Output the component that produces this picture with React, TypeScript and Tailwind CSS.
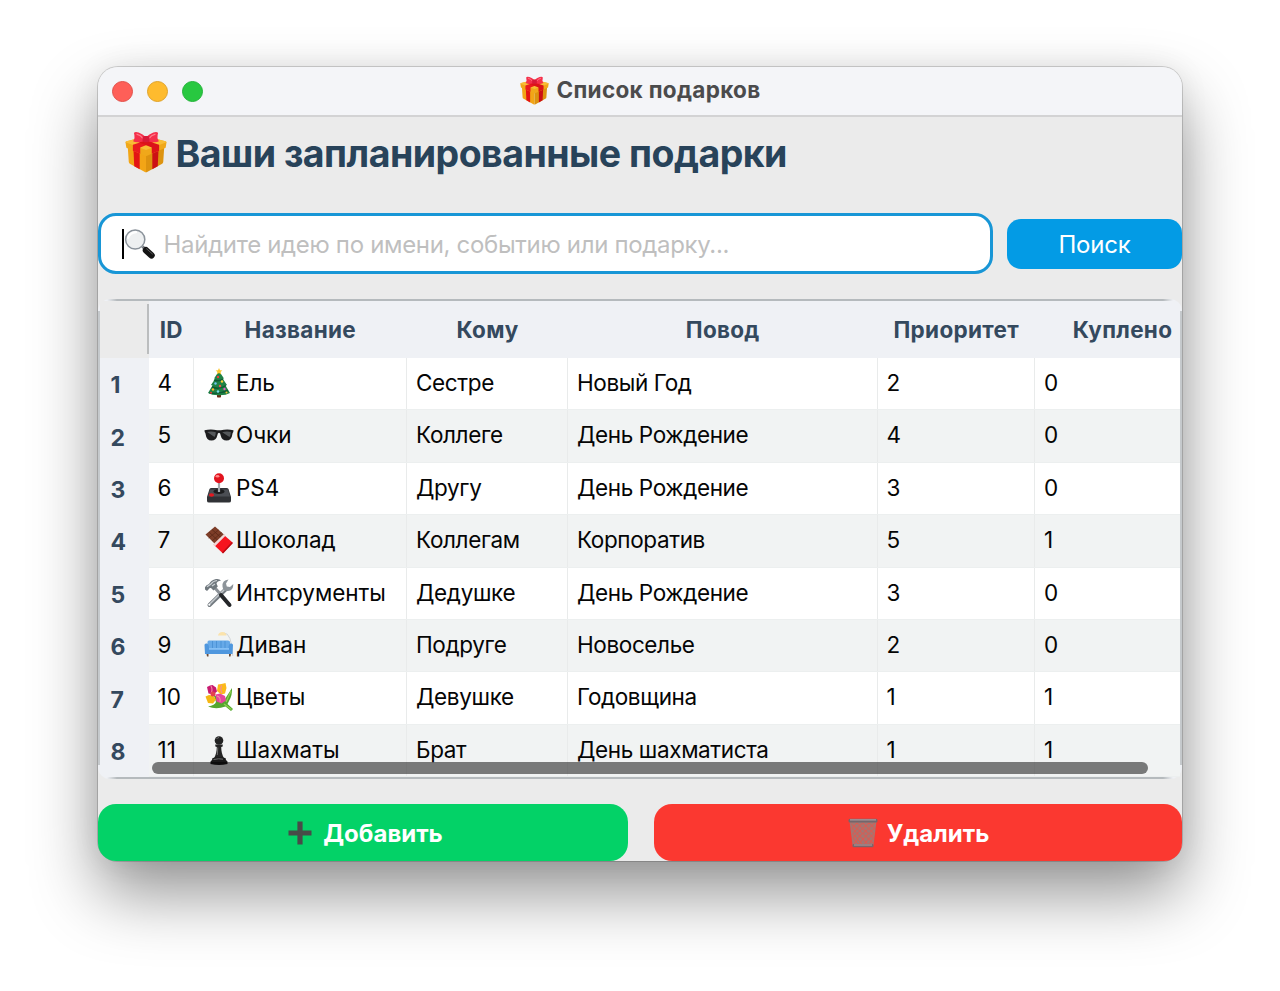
import React from "react";

type IconProps = { className?: string };

const Gift = ({ className }: IconProps) => (
  <svg viewBox="0 0 40 40" className={className}>
    <path d="M2.500 13 L20 20 L20 39.300 Q19.500 39.400 18.500 38.800 L5 31.500 Q3.800 30.800 3.600 29.500 Z" fill="#f2a516" />
    <path d="M37.500 13 L20 20 L20 39.300 Q20.500 39.400 21.500 38.800 L35 31.500 Q36.200 30.800 36.400 29.500 Z" fill="#dd930f" />
    <path d="M8 16 L14 18.500 L14 36.400 L8.800 33.600 Z" fill="#e31414" />
    <path d="M26 18.500 L32 16 L31.200 33.600 L26 36.400 Z" fill="#cc1014" />
    <path d="M.5 11 Q.5 10 1.500 9.700 L20 5 L38.500 9.700 Q39.500 10 39.500 11 L38.700 16 L20 24 L1.300 16 Z" fill="#f0a81a" />
    <path d="M.5 10.800 Q.5 10 1.500 9.700 L20 5 L38.500 9.700 Q39.500 10 39.500 10.800 L20 18 Z" fill="#f9bd36" />
    <path d="M7.500 13.200 L23 8 L30 9.500 L14.500 15.700 L14.500 21.700 L7.500 18.700 Z" fill="#ea1b1f" />
    <path d="M32.500 13.200 L17 8 L10 9.500 L25.500 15.700 L25.500 21.700 L32.500 18.700 Z" fill="#dc1319" />
    <path d="M19 9.500 Q11 12 7.700 9.800 Q10 7 8.500 2 Q9.500 .3 13 1.500 Q17 3 20 6 Q23 3 27 1.500 Q30.500 .3 31.500 2 Q30 7 32.300 9.800 Q29 12 21 9.500 Z" fill="#f5304b" />
    <path d="M11 3 Q15 4 17.500 7.500 M29 3 Q25 4 22.500 7.500" stroke="#ff7a88" strokeWidth="1.200" fill="none" />
    <rect x="16.700" y="4.800" width="6.600" height="6" rx="2" fill="#d81a38" />
  </svg>
);

const Magnifier = ({ className }: IconProps) => (
  <svg viewBox="0 0 32 32" className={className}>
    <path d="M18.500 18.500 L23 23" stroke="#777b80" strokeWidth="3" />
    <path d="M22 22.300 L27.500 27.300" stroke="#141414" strokeWidth="6.500" strokeLinecap="round" />
    <path d="M22.500 20.800 L28.500 26" stroke="#5a5a5a" strokeWidth="1" strokeLinecap="round" />
    <circle cx="11.200" cy="11.500" r="9.600" fill="#eef0f1" stroke="#8b939b" strokeWidth="1.500" />
    <path d="M4 10 Q6 4.500 12 4.200" stroke="#fff" strokeWidth="2.200" fill="none" strokeLinecap="round" />
  </svg>
);

const Tree = ({ className }: IconProps) => (
  <svg viewBox="0 0 30 30" className={className}>
    <rect x="13" y="25" width="4" height="4.500" rx=".8" fill="#6e2c14" />
    <path d="M15 3 L20 10.500 L18.800 10.800 L23 17 L21.500 17.500 L26 25 Q22 27.500 15 27.300 Q8 27.500 4 25 L8.500 17.500 L7 17 L11.200 10.800 L10 10.500 Z" fill="#1f8246" />
    <path d="M10 12 Q15 14 19 11 M8 19 Q15 22 22 17.500 M5.500 25 Q15 26.500 24 22.500" stroke="#0e5a35" strokeWidth="1.400" fill="none" />
    <path d="M15 0 L16 2.300 L18.400 2.500 L16.500 4 L17.200 6.400 L15 5.100 L12.800 6.400 L13.500 4 L11.600 2.500 L14 2.300 Z" fill="#fdc62d" />
    <circle cx="14" cy="9" r="1.200" fill="#f03b3b" />
    <circle cx="18" cy="13.500" r="1.200" fill="#ffce3a" />
    <circle cx="11.500" cy="15.500" r="1.200" fill="#6fc5f2" />
    <circle cx="16" cy="18" r="1.200" fill="#f3544b" />
    <circle cx="20.500" cy="21" r="1.200" fill="#e35cc0" />
    <circle cx="9" cy="21.500" r="1.200" fill="#ffb52e" />
    <circle cx="14" cy="23.500" r="1.200" fill="#7bdcec" />
    <circle cx="7" cy="24.800" r="1" fill="#ef3a3a" />
    <circle cx="22.500" cy="24.500" r="1" fill="#f8c235" />
  </svg>
);

const Sunglasses = ({ className }: IconProps) => (
  <svg viewBox="0 0 30 30" className={className}>
    <path d="M.5 10.200 Q7 8.600 13.200 10.300 L16.800 10.300 Q23 8.600 29.500 10.200 L29.300 12 Q28.500 12.500 28.300 14.500 Q27.600 20.500 22.500 20.500 Q17.800 20.500 16.700 15.500 Q16.400 12.800 15 12.800 Q13.600 12.800 13.300 15.500 Q12.200 20.500 7.500 20.500 Q2.400 20.500 1.700 14.500 Q1.500 12.500 .7 12 Z" fill="#1d1d1f" />
    <path d="M3.200 12 Q7 10.800 11.800 12.200 Q11.800 15 10.500 17 Z M18.200 12.200 Q23 10.800 26.800 12 Q27 15 25.500 17 Z" fill="#55585b" />
  </svg>
);

const Joystick = ({ className }: IconProps) => (
  <svg viewBox="0 0 30 30" className={className}>
    <path d="M5.500 16 Q6 15 7.500 15 L22.500 15 Q24 15 24.500 16 L27 24 L27 28 Q26.900 29.500 25 29.500 L5 29.500 Q3.100 29.500 3 28 L3 24 Z" fill="#303236" />
    <path d="M6 16.500 L24 16.500 L26 23.500 L4 23.500 Z" fill="#4b4e54" />
    <ellipse cx="15" cy="18.500" rx="5.500" ry="2.500" fill="#1b1c1e" />
    <rect x="13.900" y="9" width="2.200" height="10" fill="#a5a9ae" />
    <circle cx="15" cy="5.200" r="5" fill="#e2131e" />
    <ellipse cx="13.500" cy="3.300" rx="1.900" ry="1.300" fill="#ff8b8b" />
    <ellipse cx="7.500" cy="22" rx="2.600" ry="1.700" fill="#e41820" />
  </svg>
);

const Chocolate = ({ className }: IconProps) => (
  <svg viewBox="0 0 30 30" className={className}>
    <path d="M11 1.500 L20.500 10 L11 19 L1.500 9.500 Z" fill="#7d3d28" />
    <path d="M8 4.500 L17.500 13 M5 7 L14.500 16 M14.500 5 L4.700 13 M17.500 7.500 L8 16" stroke="#5a2818" strokeWidth=".8" />
    <path d="M20 10 L28.500 17.500 Q28.800 18 28.500 18.500 L19.500 28 Q19 28.300 18.500 28 L9.500 19.500 Z" fill="#f6141e" />
    <path d="M20 9 L21.500 10.800 L11 21.200 L9 19.500 Z" fill="#f0d9d8" />
    <path d="M28.800 18 L19 28.500 L18 27.500 L27.800 17 Z" fill="#b80c14" />
  </svg>
);

const Tools = ({ className }: IconProps) => (
  <svg viewBox="0 0 30 30" className={className}>
    <path d="M21.500 11.500 L5.500 27" stroke="#737a80" strokeWidth="4" strokeLinecap="round" />
    <path d="M20.500 11.500 L5.300 26.500" stroke="#c2c7cb" strokeWidth="1.600" strokeLinecap="round" />
    <path d="M24.500 1.500 Q18 2 18.500 8.500 Q19 13.500 24 13 Q29.500 12.500 29.300 6 L26 9 L22.800 8.500 L22 5.500 Z" fill="#8d949a" />
    <path d="M11 10 L18 18" stroke="#8a9096" strokeWidth="3" />
    <path d="M17 17 L25.500 27" stroke="#242629" strokeWidth="4" strokeLinecap="round" />
    <path d="M1 11.500 Q.3 9 2.300 7.500 L5 6 Q7 2 12 1 Q15.500 .5 17 2.500 Q13 3 12.500 5.500 L13.800 8.500 L9.500 12.500 L7 10 Q5 9.500 4.500 11.500 L3 13 Z" fill="#70787e" />
    <path d="M3 8.800 L7 6 Q9 3 13 2.500 M8 8 L11 6" stroke="#ccd1d5" strokeWidth="1.200" fill="none" />
    <circle cx="5.300" cy="26.700" r="1" fill="#fff" />
  </svg>
);

const Sofa = ({ className }: IconProps) => (
  <svg viewBox="0 0 30 30" className={className}>
    <path d="M20 3 Q27.500 2.500 28.800 26" stroke="#c9cbce" strokeWidth=".8" fill="none" />
    <path d="M14 5.500 Q14.500 2 18.500 2 Q22 2.200 22.500 5.500 Z" fill="#fbe3ac" />
    <path d="M3.500 12 Q3.500 10.500 5 10.500 L24 10.500 Q26 10.500 26 12 L26 21 L3.500 21 Z" fill="#66a9e8" />
    <path d="M8.500 11 V18 M12.500 11 V18 M17 11 V18 M21 11 V18" stroke="#4089cf" strokeWidth=".7" />
    <path d="M.5 15 Q.5 13 3 13.500 Q5 14 5 18 L24.500 18 Q24.500 14 26.500 13.500 Q29 13 29 15 L28.500 24 L1 24 Z" fill="#4f97de" />
    <path d="M5 18 L25 18 L25 19.800 L5 19.800 Z" fill="#85c0f5" />
    <path d="M2.500 24 h2 v2.500 h-1.500 Z M25 24 h2 l-.5 2.500 h-1.500 Z" fill="#6a4a36" />
  </svg>
);

const Bouquet = ({ className }: IconProps) => (
  <svg viewBox="0 0 30 30" className={className}>
    <path d="M10 14 Q18 13 21 17 L28 6 Q28.500 13 25 19 L23.500 22 L29 27 L27 29 L21.500 24.500 Q12 28 4 24.500 Q11 23 12 20 Z" fill="#54a72e" />
    <path d="M20 22 L27.500 27.500 M22 20 L27 9" stroke="#8ed04e" strokeWidth="1.300" />
    <path d="M3 5 L6 3.500 L8.500 3 L12 5.500 L13 9.500 L9.500 12.500 L4.500 11.500 Z" fill="#c81a70" />
    <path d="M14 2.500 L17.500 2 L21.500 1 L22.500 6 L21 11.500 L17 12.500 L13 9 Z" fill="#fcb91a" />
    <path d="M1.500 14.500 L5 13 L9 13.500 L12 17.500 L9 21.500 L4 21 Z" fill="#f5b714" />
    <path d="M11.500 12.500 L16 11.500 L21 14 L22 18.500 L17.500 21.500 L12.500 19.500 Z" fill="#e6459c" />
    <path d="M7 4 Q9 8 7 11.500 M17.500 3.500 Q16 8 18 11 M13 14 Q17 15 16 20" stroke="#f58a9f" strokeWidth="1.100" fill="none" />
    <circle cx="9" cy="12" r="2.500" fill="#e2414e" />
  </svg>
);

const Pawn = ({ className }: IconProps) => (
  <svg viewBox="0 0 30 30" className={className}>
    <path d="M11.300 9.500 L18.700 9.500 L18.700 11.500 L17.200 12 Q17.300 19 20 23 L10 23 Q12.700 19 12.800 12 L11.300 11.500 Z" fill="#242424" />
    <circle cx="15" cy="5.500" r="4.300" fill="#222" />
    <path d="M8.500 23 Q15 21.500 21.500 23 L22 25 L23.500 26.500 L23.500 29 Q15 31 6.500 29 L6.500 26.500 L8 25 Z" fill="#191919" />
    <path d="M12.500 4 Q13.500 2.500 15 2.500 M9.500 24.500 Q15 23.200 19 24.200 M13.800 12.500 L13.300 20" stroke="#777" strokeWidth=".9" fill="none" />
  </svg>
);

const Trash = ({ className }: IconProps) => (
  <svg viewBox="0 0 30 30" className={className}>
    <path d="M1.500 3 L28.500 3 L25.500 27 Q25.300 28.500 23.500 28.500 L6.500 28.500 Q4.700 28.500 4.500 27 Z" fill="#a8746f" />
    <path d="M3.500 6 L9 11 L4.500 16 L10 21 L6 26 M9 5 L14.500 10.500 L9 15.500 L15 21 L10 27 M15 5 L20.500 10.500 L15 15.500 L20.500 21 L15.500 27 M21 5 L26.500 10 L21 15.500 L25.500 20 L20.500 27 M27 5 L20.500 10.500 L26 15.500 L20.500 21 L25 25 M21 5 L14.500 10.500 L20.500 15.500 L15 21 L20.500 27 M14.500 5 L9 10.500 L14.500 15.500 L9 21 L15 27 M9 5 L4 10 L9 15.500 L5 20 L10 26" stroke="#e4564c" strokeWidth=".9" fill="none" />
    <rect x=".5" y=".8" width="29" height="3.600" rx="1.500" fill="#74666b" />
    <rect x="2" y="1.400" width="26" height="1" fill="#b8a5a8" />
    <rect x="4.500" y="26" width="21" height="3.200" rx="1.200" fill="#7c656a" />
    <path d="M6 27 L24 27" stroke="#c5a9a9" strokeWidth=".8" />
  </svg>
);

const Plus = ({ className }: IconProps) => (
  <svg viewBox="0 0 24 24" className={className}>
    <path d="M9.400 .5 H14.600 V9.400 H23.500 V14.600 H14.600 V23.500 H9.400 V14.600 H.5 V9.400 H9.400 Z" fill="#484b48" />
  </svg>
);

const COLS = "grid grid-cols-[44.500px_213.500px_161px_309.500px_157.500px_175px]";

const headers = ["ID", "Название", "Кому", "Повод", "Приоритет", "Куплено"];

const rows = [
  { id: 4, Icon: Tree, name: "Ель", who: "Сестре", why: "Новый Год", prio: 2, done: 0 },
  { id: 5, Icon: Sunglasses, name: "Очки", who: "Коллеге", why: "День Рождение", prio: 4, done: 0 },
  { id: 6, Icon: Joystick, name: "PS4", who: "Другу", why: "День Рождение", prio: 3, done: 0 },
  { id: 7, Icon: Chocolate, name: "Шоколад", who: "Коллегам", why: "Корпоратив", prio: 5, done: 1 },
  { id: 8, Icon: Tools, name: "Интсрументы", who: "Дедушке", why: "День Рождение", prio: 3, done: 0 },
  { id: 9, Icon: Sofa, name: "Диван", who: "Подруге", why: "Новоселье", prio: 2, done: 0 },
  { id: 10, Icon: Bouquet, name: "Цветы", who: "Девушке", why: "Годовщина", prio: 1, done: 1 },
  { id: 11, Icon: Pawn, name: "Шахматы", who: "Брат", why: "День шахматиста", prio: 1, done: 1 },
];

function Cell({ children, className = "" }: { children: React.ReactNode; className?: string }) {
  return (
    <div
      className={`flex items-center border-r border-[#e9ebeb] pb-[1.500px] pl-[9px] whitespace-nowrap ${className}`}
    >
      {children}
    </div>
  );
}

export default function App() {
  return (
    <div className="h-[991px] w-[1280px] overflow-hidden bg-white pt-[67px] pl-[98px] font-['Inter','Noto_Sans',sans-serif]">
      <div className="flex h-[794px] w-[1084px] flex-col rounded-[20px] bg-[#ebebeb] shadow-[0_0_0_1px_rgba(0,0,0,0.16),0_33px_66px_rgba(0,0,0,0.42),0_0_30px_rgba(0,0,0,0.07)]">
        <div className="grid h-[50px] shrink-0 grid-cols-[1fr_auto_1fr] items-center rounded-t-[20px] border-b-2 border-[#d3d3d4] bg-[#f4f5f8]">
          <div className="flex gap-[14px] pl-[14px]">
            <span className="size-[21px] rounded-full border border-[#e2504a] bg-[#fe5f58]" />
            <span className="size-[21px] rounded-full border border-[#e0a32a] bg-[#febb2e]" />
            <span className="size-[21px] rounded-full border border-[#23b33a] bg-[#28c840]" />
          </div>
          <div className="flex items-center gap-[8px] pb-[2px]">
            <Gift className="size-[29px]" />
            <span className="text-[22.500px] font-bold tracking-[0.320px] text-[#4b4b4c]">Список подарков</span>
          </div>
        </div>

        <div className="flex h-[96px] shrink-0 gap-[9px] pt-[14px] pl-[26.500px]">
          <Gift className="size-[42px]" />
          <h1 className="text-[37.500px] leading-[46px] font-bold tracking-[-0.530px] whitespace-nowrap text-[#28435a]">
            Ваши запланированные подарки
          </h1>
        </div>

        <div className="flex h-[61px] shrink-0 items-center gap-[14px]">
          <div className="flex h-[61px] w-[895px] items-center rounded-[18px] border-[3px] border-[#1896d6] bg-white pl-[21px]">
            <span className="h-[30px] w-[2px] bg-black" />
            <Magnifier className="size-[32px]" />
            <span className="ml-[7.500px] pt-[2px] text-[24px] tracking-[-0.320px] whitespace-nowrap text-[#bfbfbf]">
              Найдите идею по имени, событию или подарку...
            </span>
          </div>
          <button className="h-[50px] w-[175px] rounded-[14px] bg-[#039be5] pt-[2px] text-[24px] tracking-[-0.200px] text-white">
            Поиск
          </button>
        </div>

        <div className="mt-[25px] flex h-[480px] shrink-0 flex-col rounded-[12px] bg-[#eff1f5]">
          <div className="mx-[9px] h-[2px] shrink-0 [background-image:linear-gradient(to_right,transparent,#b5babd_10px,#b5babd_calc(100%-10px),transparent)]" />
          <div className="flex min-h-0 flex-1">
            <div className="mt-[10px] mb-[12px] w-[2px] shrink-0 bg-[#c5c9cc]" />
            <div className="flex w-[49px] shrink-0 flex-col">
              <div className="h-[57px] shrink-0 bg-[#ebebeb] pt-[3px]">
                <div className="h-[50px] border-r-2 border-[#bbbdbe]" />
              </div>
              {rows.map((r, i) => (
                <div
                  key={r.id}
                  className="flex h-[52.400px] shrink-0 items-center pt-[2.500px] pl-[10.500px] text-[23px] font-bold text-[#34495e]"
                >
                  {i + 1}
                </div>
              ))}
            </div>
            <div className="relative flex w-[1031px] flex-col overflow-hidden">
              <div className={`${COLS} h-[57px] shrink-0`}>
                {headers.map((label) => (
                  <div
                    key={label}
                    className="flex items-center justify-center pt-[1px] text-[22.500px] font-bold tracking-[0.300px] text-[#34495e]"
                  >
                    {label}
                  </div>
                ))}
              </div>
              {rows.map((r, i) => (
                <div
                  key={r.id}
                  className={`${COLS} h-[52.400px] shrink-0 border-b border-[#ecefef] text-[22.500px] text-[#050505] ${i % 2 ? "bg-[#f1f3f3]" : "bg-white"}`}
                >
                  <Cell className="-ml-[0.500px]">{r.id}</Cell>
                  <Cell>
                    <r.Icon className="ml-[1px] size-[30px] shrink-0" />
                    <span className="ml-[2.500px] tracking-[-0.050px]">{r.name}</span>
                  </Cell>
                  <Cell className="tracking-[-0.350px]">{r.who}</Cell>
                  <Cell className="tracking-[-0.380px]">{r.why}</Cell>
                  <Cell>{r.prio}</Cell>
                  <Cell>{r.done}</Cell>
                </div>
              ))}
              <div className="absolute bottom-[3px] left-[3px] h-[12px] w-[996px] rounded-full bg-black/50" />
            </div>
            <div className="mt-[10px] mb-[12px] w-[2px] shrink-0 bg-[#c5c9cc]" />
          </div>
          <div className="mx-[9px] h-[2px] shrink-0 [background-image:linear-gradient(to_right,transparent,#b5babd_10px,#b5babd_calc(100%-10px),transparent)]" />
        </div>

        <div className="mt-[25px] flex h-[57px] shrink-0 justify-between">
          <button className="flex w-[530px] items-center justify-center gap-[11px] rounded-[18px] bg-[#03d267] pt-[2px] pl-[5px] text-[24px] font-bold text-white">
            <Plus className="-mt-[2px] size-[24px]" />
            <span>Добавить</span>
          </button>
          <button className="flex w-[528px] items-center justify-center gap-[9px] rounded-[18px] bg-[#fb3830] pt-[2px] pl-[1px] text-[24px] font-bold text-white">
            <Trash className="-mt-[2px] size-[30px]" />
            <span>Удалить</span>
          </button>
        </div>
      </div>
    </div>
  );
}
